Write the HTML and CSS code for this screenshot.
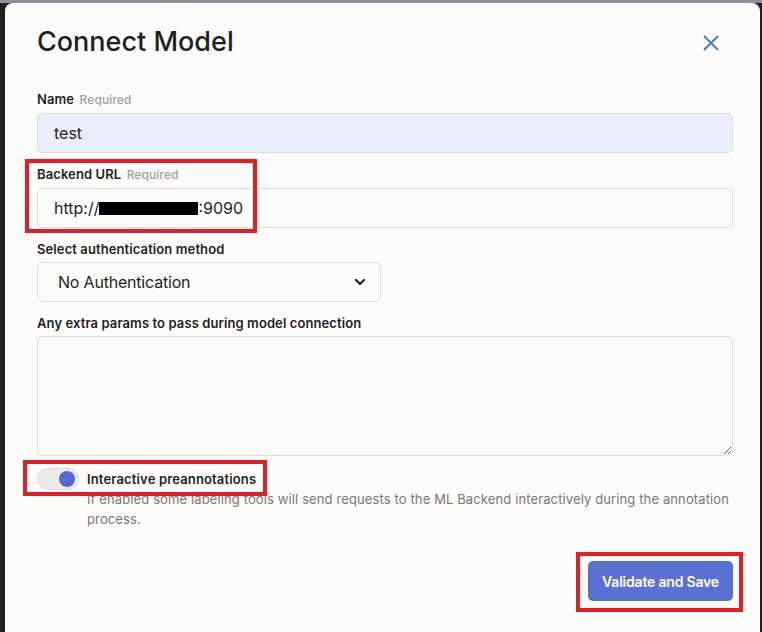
FILE: index.html
```html
<!DOCTYPE html>
<html>
<head>
<meta charset="utf-8">
<link rel="stylesheet" href="styles.css">
</head>
<body>
<div class="modal">
  <div class="header">
    <h1 class="title">Connect Model</h1>
    <svg class="close" width="16" height="16" viewBox="0 0 16 16"><path d="M1 1 L15 15 M15 1 L1 15" stroke="#5a6fd6" stroke-width="2" fill="none"/></svg>
  </div>

  <div class="field">
    <div class="label">Name <span class="req">Required</span></div>
    <div class="input filled">test</div>
  </div>

  <div class="field">
    <div class="label">Backend URL <span class="req">Required</span></div>
    <div class="input">http://<span class="redact"></span>:9090</div>
  </div>

  <div class="field">
    <div class="label">Select authentication method</div>
    <div class="input select"><span>No Authentication</span>
      <svg width="12" height="8" viewBox="0 0 12 8"><path d="M2 2 L6 6 L10 2" stroke="#222" stroke-width="2.2" fill="none" stroke-linecap="round" stroke-linejoin="round"/></svg>
    </div>
  </div>

  <div class="field">
    <div class="label">Any extra params to pass during model connection</div>
    <textarea class="textarea"></textarea>
  </div>

  <div class="toggle-row">
    <span class="toggle"><span class="knob"></span></span>
    <span class="toggle-label">Interactive preannotations</span>
  </div>
  <div class="desc">If enabled some labeling tools will send requests to the ML Backend interactively during the annotation process.</div>

  <div class="footer">
    <button class="btn">Validate and Save</button>
  </div>

  <div class="mark mark-url"></div>
  <div class="mark mark-toggle"></div>
  <div class="mark mark-btn"></div>
</div>
</body>
</html>
```

FILE: styles.css
```css
html, body {
  margin: 0;
  height: 100%;
}
body {
  background: linear-gradient(#8e9198 0 3px, transparent 3px), #1f2023;
  padding: 3px 2px 0 5px;
  box-sizing: border-box;
  overflow: hidden;
  font-family: "Inter", "Noto Sans", sans-serif;
  color: #1f1f1f;
}
.modal {
  position: relative;
  background: #fcfcfa;
  border-radius: 8px 8px 0 0;
  height: 640px;
  box-sizing: border-box;
  padding: 22px 27px 0 32px;
}
.header {
  display: flex;
  justify-content: space-between;
  align-items: center;
  height: 34px;
  padding-right: 14px;
}
.title {
  margin: 0;
  font-size: 27px;
  font-weight: 500;
  letter-spacing: 0;
  line-height: 34px;
}
.close {
  display: block;
  margin-top: 1px;
}
.field {
  margin-top: 11px;
}
.header + .field {
  margin-top: 30px;
}
.label {
  font-size: 13px;
  font-weight: 600;
  line-height: 18px;
  padding-top: 1px;
  margin-bottom: 4px;
  letter-spacing: 0.1px;
}
.req {
  font-size: 12px;
  font-weight: 500;
  color: #a3a09a;
  margin-left: 2px;
}
.input {
  height: 40px;
  box-sizing: border-box;
  border: 1px solid #e1ded7;
  border-radius: 5px;
  background: #fcfcfa;
  display: flex;
  align-items: center;
  padding: 0 16px;
  font-size: 16px;
}
.input.filled {
  background: #e8eefb;
}
.redact {
  display: inline-block;
  width: 99px;
  height: 13px;
  background: #000;
}
.select {
  width: 344px;
  justify-content: space-between;
  padding: 0 14px 0 20px;
  letter-spacing: -0.2px;
}
.select svg {
  display: block;
}
.textarea {
  display: block;
  width: 100%;
  height: 120px;
  box-sizing: border-box;
  border: 1px solid #e1ded7;
  border-radius: 5px;
  background: #fcfcfa;
  resize: vertical;
  margin: 0;
}
.toggle-row {
  display: flex;
  align-items: center;
  margin-top: 12px;
  height: 22px;
}
.toggle {
  width: 42px;
  height: 22px;
  box-sizing: border-box;
  border-radius: 11px;
  background: #ebebea;
  border: 1px solid #e0dfdc;
  display: flex;
  align-items: center;
  justify-content: flex-end;
  padding-right: 3px;
}
.knob {
  width: 16px;
  height: 16px;
  border-radius: 50%;
  background: #5468d4;
}
.toggle-label {
  margin-left: 8px;
  font-size: 13px;
  font-weight: 600;
  letter-spacing: 0.15px;
}
.desc {
  margin-left: 50px;
  font-size: 13px;
  line-height: 20px;
  color: #7a7874;
  margin-top: -1px;
  letter-spacing: 0.12px;
}
.footer {
  display: flex;
  justify-content: flex-end;
  margin-top: 32px;
}
.btn {
  height: 40px;
  width: 145px;
  border: none;
  border-radius: 5px;
  background: #5a70d2;
  color: #fff;
  font-family: inherit;
  font-size: 14px;
  font-weight: 600;
  letter-spacing: -0.2px;
}
.mark {
  position: absolute;
  border: 4px solid #e31e24;
  box-sizing: border-box;
}
.mark-url {
  left: 20px;
  top: 156px;
  width: 232px;
  height: 74px;
}
.mark-toggle {
  left: 18px;
  top: 457px;
  width: 244px;
  height: 36px;
}
.mark-btn {
  left: 571px;
  top: 549px;
  width: 167px;
  height: 60px;
}
```
